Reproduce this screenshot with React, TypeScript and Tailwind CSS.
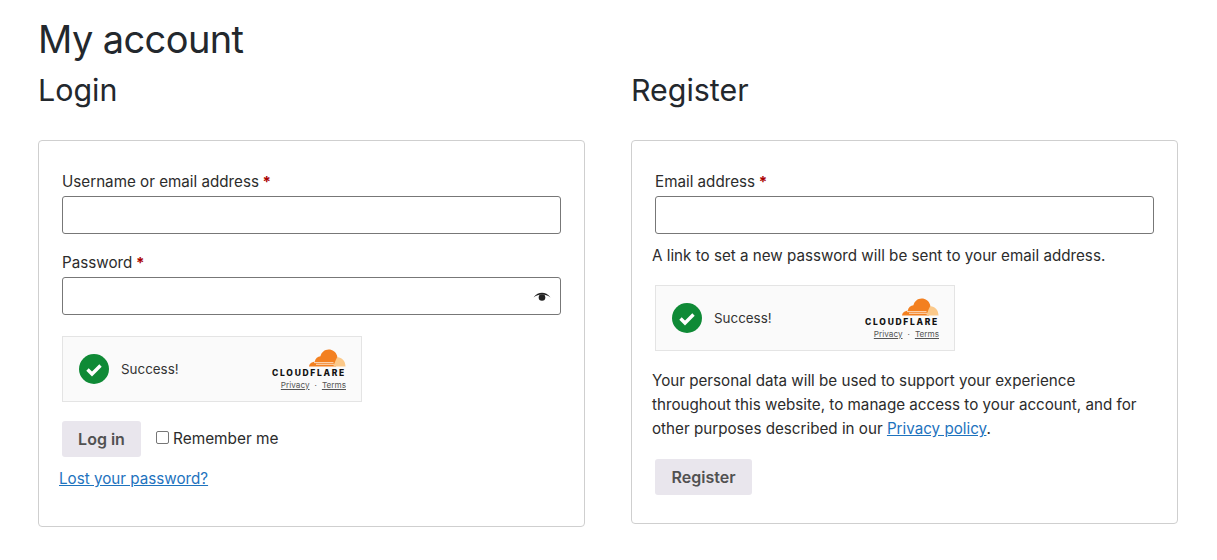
const Star = () => <span className="font-bold text-[#a00]"> *</span>;

const CloudLogo = () => (
  <svg width="38" height="18" viewBox="0 0 38 18" className="block">
    <path
      d="M1 17.5c.2-2.6 2-4.4 4.4-4.6.4-.1.8-.1 1.2 0C7.400 9.400 9.800 7.400 12.400 7.300c.9-3.900 4.200-6.800 8.300-6.800 3.900 0 7.200 2.500 8.300 6 .5 1.400.6 2.700.3 4.100-.2 1.200-.8 4.800-1.300 6.900H1z"
      fill="#f38020"
    />
    <path
      d="M29 8.400c4.300-.4 8.300 3.200 8.500 9.100H25.300c.8-2.400 2.200-6.400 3.700-9.100z"
      fill="#fbc98a"
    />
    <path d="M6 13.600h19.500M8 15.300h18" stroke="#fff" strokeWidth="0.7" fill="none" />
  </svg>
);

const Turnstile = () => (
  <div className="flex h-[66px] w-[300px] items-center border border-[#e4e4e4] bg-[#fafafa] pr-[15px] pl-[16px]">
    <svg width="30" height="30" viewBox="0 0 30 30">
      <circle cx="15" cy="15" r="15" fill="#0f8a36" />
      <path d="M8.500 15.500l4.500 4.500 8.500-8.500" stroke="#fff" strokeWidth="3.400" fill="none" />
    </svg>
    <span className="ml-[12px] text-[13.400px] text-[#333]">Success!</span>
    <div className="ml-auto flex flex-col items-end">
      <CloudLogo />
      <span className="mt-[1px] text-[8.500px] leading-[10px] font-extrabold tracking-[1.700px] text-[#111]">CLOUDFLARE</span>
      <span className="mt-[2px] flex gap-[5px] text-[8.200px] leading-[10px] text-[#555]">
        <span className="underline">Privacy</span>
        <span>·</span>
        <span className="underline">Terms</span>
      </span>
    </div>
  </div>
);

const Field = ({ label, eye }: { label: string; eye?: boolean }) => (
  <div>
    <div className="h-[24px]">
      {label}
      <Star />
    </div>
    <div className="mt-[2px] flex h-[38px] items-center justify-end rounded-[3px] border border-[#777] pr-[9px]">
      {eye && (
        <svg width="18" height="12" viewBox="0 0 18 12" className="mt-[2px]">
          <path d="M.5 6.500C3 3 6 1.800 9 1.800s6 1.200 8.500 4.700C14.500 4.400 12 3.600 9 3.600S3.500 4.400.5 6.500z" fill="#222" />
          <circle cx="9" cy="6.500" r="3.300" fill="#222" />
        </svg>
      )}
    </div>
  </div>
);

export default function App() {
  return (
    <div className="h-[560px] w-[1217px] overflow-hidden bg-white px-[38px] font-['Inter',sans-serif] text-[15.200px] leading-[24px] text-[#2c2c2c]">
      <h1 className="pt-[15px] text-[38px] leading-[48px] tracking-[-0.600px] text-[#23282d]">My account</h1>
      <div className="mt-[6px] flex gap-[46px]">
        <section className="w-[547px]">
          <h2 className="text-[30.400px] leading-[42px] text-[#23282d]">Login</h2>
          <div className="mt-[29px] h-[387px] rounded-[4px] border border-[#cfcfcf] px-[23px] pt-[29px]">
            <Field label="Username or email address" />
            <div className="mt-[17px]">
              <Field label="Password" eye />
            </div>
            <div className="mt-[21px]">
              <Turnstile />
            </div>
            <div className="mt-[19px] flex items-center">
              <button className="h-[36px] w-[79px] rounded-[3px] bg-[#e9e6ed] text-[16px] font-semibold text-[#515151]">Log in</button>
              <span className="mb-[3px] ml-[15px] h-[13px] w-[13px] rounded-[2px] border border-[#767676]" />
              <span className="ml-[4px] -translate-y-[0.500px] text-[15.400px]">Remember me</span>
            </div>
            <a className="mt-[10px] -ml-[3px] block text-[#1e73be] underline">Lost your password?</a>
          </div>
        </section>
        <section className="w-[547px]">
          <h2 className="text-[30.400px] leading-[42px] text-[#23282d]">Register</h2>
          <div className="mt-[29px] h-[384px] rounded-[4px] border border-[#cfcfcf] px-[23px] pt-[29px]">
            <Field label="Email address" />
            <p className="mt-[10px] -ml-[3px]">A link to set a new password will be sent to your email address.</p>
            <div className="mt-[17px]">
              <Turnstile />
            </div>
            <p className="mt-[18px] -ml-[3px]">
              Your personal data will be used to support your experience throughout this website, to manage access to your account, and for other purposes described in our{" "}
              <a className="text-[#1e73be] underline">Privacy policy</a>.
            </p>
            <button className="mt-[18px] h-[36px] w-[97px] rounded-[3px] bg-[#e9e6ed] text-[16px] font-semibold text-[#515151]">Register</button>
          </div>
        </section>
      </div>
    </div>
  );
}
